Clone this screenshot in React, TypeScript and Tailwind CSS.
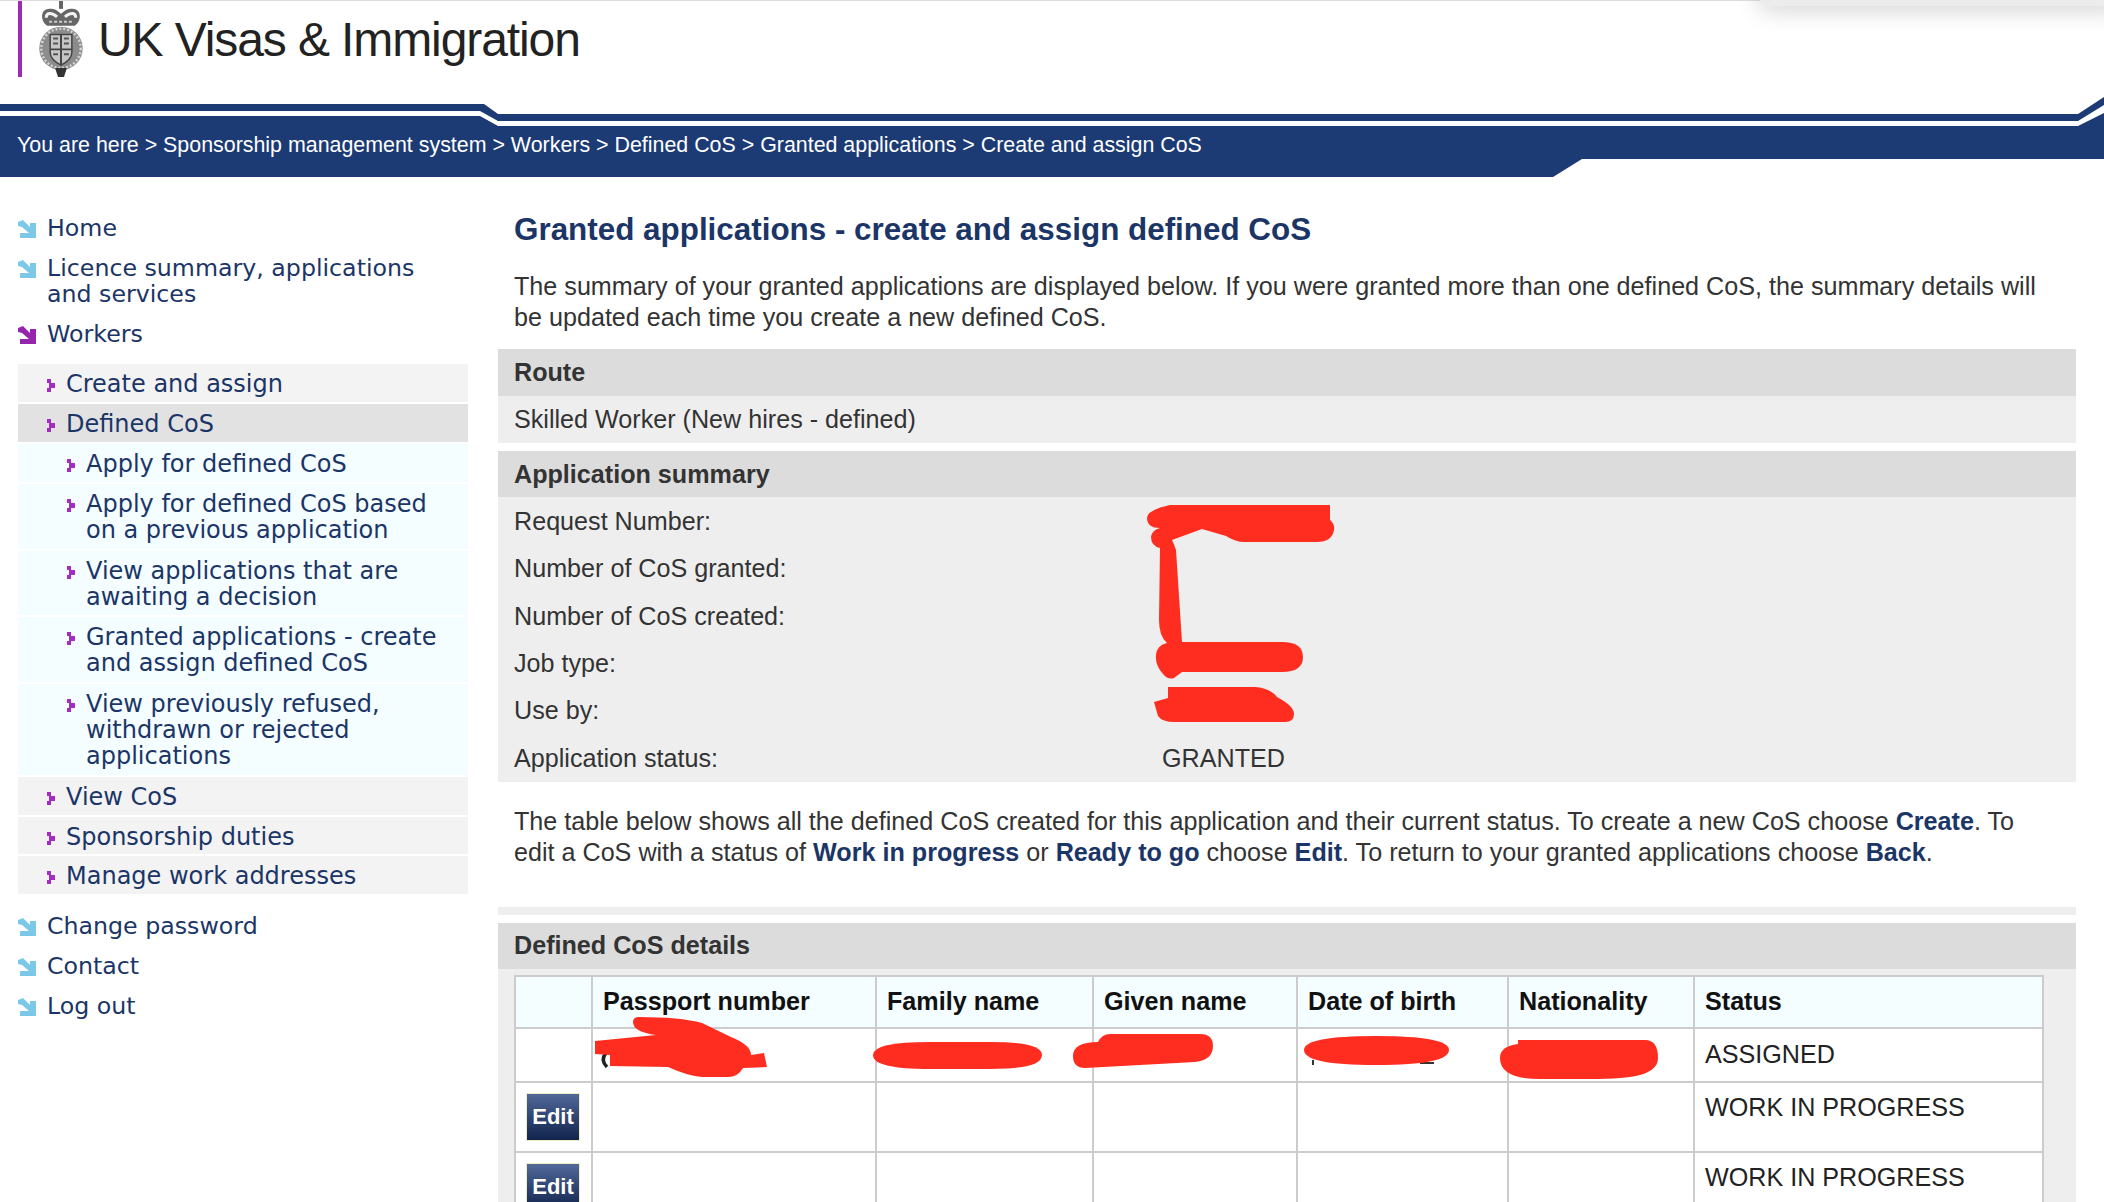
const Chevron = () => (
  <svg viewBox="0 0 8 13" className="mt-[8px] h-[13px] w-[8px] shrink-0">
    <path d="M0 0h4v4h4v5H4v4H0V9h2V4H0z" fill="#a42cc0" />
  </svg>
);

const BigArrow = ({ color }: { color: string }) => (
  <svg viewBox="0 0 18 18" className="mt-[5px] h-[18px] w-[18px] shrink-0">
    <path d="M0 2l5-2 7 7V3h6v15H2v-5h9L4 7 0 6z" fill={color} />
  </svg>
);

const TopLink = ({ label, active, className }: { label: string; active?: boolean; className?: string }) => (
  <div className={`flex gap-[11px] text-[23.7px] ${className ?? ''}`}>
    <BigArrow color={active ? '#9625ae' : '#7cc8e8'} />
    <span className="whitespace-pre-line">{label}</span>
  </div>
);

const SubLink = ({ label, bg, h, level }: { label: string; bg: string; h: string; level: number }) => (
  <div className={`flex gap-[11px] pt-[7px] ${bg} ${h} ${level === 2 ? 'pl-[49px]' : 'pl-[29px]'}`}>
    <Chevron />
    <span className="whitespace-pre-line">{label}</span>
  </div>
);

const subNav = [
  { label: 'Create and assign', bg: 'bg-[#f3f3f3]', h: 'h-[38px]', level: 1 },
  { label: 'Defined CoS', bg: 'bg-[#e2e2e2]', h: 'h-[38px]', level: 1 },
  { label: 'Apply for defined CoS', bg: 'bg-[#f4fdff]', h: 'h-[38px]', level: 2 },
  { label: 'Apply for defined CoS based\non a previous application', bg: 'bg-[#f4fdff]', h: 'h-[65px]', level: 2 },
  { label: 'View applications that are\nawaiting a decision', bg: 'bg-[#f4fdff]', h: 'h-[64px]', level: 2 },
  { label: 'Granted applications - create\nand assign defined CoS', bg: 'bg-[#f4fdff]', h: 'h-[65px]', level: 2 },
  { label: 'View previously refused,\nwithdrawn or rejected\napplications', bg: 'bg-[#f4fdff]', h: 'h-[91px]', level: 2 },
  { label: 'View CoS', bg: 'bg-[#f3f3f3]', h: 'h-[38px]', level: 1 },
  { label: 'Sponsorship duties', bg: 'bg-[#f3f3f3]', h: 'h-[37px]', level: 1 },
  { label: 'Manage work addresses', bg: 'bg-[#f3f3f3]', h: 'h-[38px]', level: 1 },
];

const summary = [
  ['Request Number:', ''],
  ['Number of CoS granted:', ''],
  ['Number of CoS created:', ''],
  ['Job type:', ''],
  ['Use by:', ''],
  ['Application status:', 'GRANTED'],
];

const Crest = () => (
  <svg viewBox="0 0 44 77" className="h-[76px] w-[44px] shrink-0">
    <path d="M22 0v8" stroke="#666" strokeWidth="4" />
    {/* crown */}
    <path d="M8 25C1 20 1 9 9 8c5-1 9 1 13 5 4-4 8-6 13-5 8 1 8 12 1 17z" fill="#666" />
    <path d="M7 17c0-5 5-6 11-1M37 17c0-5-5-6-11-1" stroke="#f2f2f2" strokeWidth="3" fill="none" />
    <path d="M10 21h24" stroke="#ccc" strokeWidth="2" strokeDasharray="3 2" />
    {/* round shield */}
    <ellipse cx="22" cy="48" rx="22" ry="22" fill="#8c8c8c" />
    <ellipse cx="22" cy="48" rx="20" ry="20" fill="none" stroke="#d4d4d4" strokeWidth="2.5" strokeDasharray="2 2" />
    <path d="M11 34h22v18c0 6-5 10-11 13-6-3-11-7-11-13z" fill="#c6c6c6" stroke="#444" strokeWidth="1.5" />
    <path d="M22 34v31M11 49h22" stroke="#444" strokeWidth="2" />
    <path d="M14 38h5M25 38h5M14 43h5M25 43h5M14 54h5M25 54h5" stroke="#555" strokeWidth="2" />
    <path d="M16 68h12l-3 9h-6z" fill="#333" />
  </svg>
);

// header stripes: upper stripe steps down at the left, breadcrumb block steps up on the right
const BandShape = () => (
  <svg viewBox="0 0 2104 80" preserveAspectRatio="none" className="absolute inset-0 h-full w-full">
    <path d="M0 7H484L498 17H2078L2104 0V8L2078 24H498L480 14H0z" fill="#1c3a73" />
    <path d="M0 19H480L498 29H2078L2104 16V62H1582L1553 80H0z" fill="#1c3a73" />
  </svg>
);

const Redactions = () => (
  <svg viewBox="0 0 2104 1202" className="pointer-events-none absolute left-0 top-0 h-[1202px] w-[2104px]">
    <path d="M606 1053Q600 1060 607 1067" stroke="#222" strokeWidth="3.5" fill="none" />
    <path d="M1313 1060v5M1420 1063h14" stroke="#333" strokeWidth="2" fill="none" />
    <g fill="#ff2d20">
      <path d="M1170 505H1330V520Q1335 524 1334 530Q1332 542 1317 542H1244Q1236 542 1226 536L1202 529L1172 540Q1174 544 1176 550L1182 642H1282Q1303 642 1303 657Q1303 672 1282 672H1182L1174 678Q1168 680 1163 674Q1155 665 1156 655Q1157 645 1167 643Q1159 636 1159 620L1160 548Q1151 546 1151 537Q1152 530 1160 528Q1147 528 1147 518Q1147 510 1170 505z" />
      <path d="M1168 687H1255Q1270 688 1277 697Q1294 706 1294 714Q1294 722 1285 722H1175Q1162 722 1158 716L1154 702L1168 698z" />
      <path d="M639 1017Q680 1017 702 1023L731 1037Q751 1045 751 1055L764 1053L767 1067L743 1068Q738 1077 728 1077H702Q688 1076 668 1067L610 1066V1055L595 1054V1041L656 1035Q633 1032 633 1022Q633 1017 639 1017z" />
      <path d="M873 1055Q873 1042 930 1042H990Q1042 1042 1042 1055Q1042 1069 990 1069H930Q873 1069 873 1055z" />
      <path d="M1098 1042Q1102 1034 1110 1034H1200Q1213 1034 1213 1046Q1213 1060 1195 1062L1085 1068Q1073 1068 1073 1056Q1073 1042 1098 1042z" />
      <path d="M1304 1050Q1304 1036 1376 1036Q1449 1036 1449 1050Q1449 1065 1376 1065Q1304 1065 1304 1050z" />
      <path d="M1518 1044V1040H1645Q1658 1040 1658 1058Q1658 1070 1640 1075Q1625 1079 1590 1079H1540Q1500 1079 1500 1058Q1500 1046 1518 1044z" />
    </g>
  </svg>
);

const EditButton = () => (
  <button className="h-[48px] w-[54px] border border-[#f0eec0] bg-gradient-to-b from-[#51699a] to-[#12244d] text-[22px] font-bold text-white">
    Edit
  </button>
);

const SectionHead = ({ title, className }: { title: string; className?: string }) => (
  <div className={`flex items-center bg-[#dcdcdc] px-[16px] font-bold text-[#333] ${className ?? 'h-[46px]'}`}>{title}</div>
);

const B = ({ children }: { children: string }) => <b className="text-[#1b3567]">{children}</b>;

const thClass = 'border-2 border-[#ccc] px-[10px] text-left align-middle font-bold text-[#111]';
const tdClass = 'border-2 border-[#ccc] px-[10px] text-[#222]';

export default function App() {
  return (
    <div className="relative h-[1202px] w-[2104px] overflow-hidden bg-white font-['Liberation_Sans',Arial,sans-serif] text-[25.15px] leading-[31px] text-[#333]">
      <div className="h-px bg-[#ddd]" />
      {/* browser popover edge sticking in at the top right */}
      <div className="absolute right-[-20px] top-[-20px] h-[26px] w-[365px] rounded-bl-[10px] bg-[#ececec] shadow-[0_4px_24px_rgba(0,0,0,0.18)]" />

      <div className="flex h-[76px] items-start">
        <div className="ml-[18px] h-[76px] w-[4px] bg-[#9c2bb3]" />
        <div className="ml-[17px]"><Crest /></div>
        <div className="ml-[15px] mt-[12px] text-[48px] leading-[54px] tracking-[-1.1px] text-[#222]">UK Visas &amp; Immigration</div>
      </div>

      <div className="relative mt-[20px] h-[80px]">
        <BandShape />
        <div className="relative pl-[17px] pt-[35px] text-[21.4px] leading-[26px] text-white">
          You are here &gt; Sponsorship management system &gt; Workers &gt; Defined CoS &gt; Granted applications &gt; Create and assign CoS
        </div>
      </div>

      <div className="flex">
        <nav className="w-[498px] shrink-0 pl-[18px] pt-[38px] font-['DejaVu_Sans','Verdana',sans-serif] text-[24px] leading-[26px] text-[#1b3567]">
          <TopLink label="Home" />
          <TopLink label={'Licence summary, applications\nand services'} className="mt-[14px]" />
          <TopLink label="Workers" active className="mt-[14px]" />
          <div className="mt-[17px] flex w-[450px] flex-col gap-[2px]">
            {subNav.map((item) => (
              <SubLink key={item.label} {...item} />
            ))}
          </div>
          <TopLink label="Change password" className="mt-[19px]" />
          <TopLink label="Contact" className="mt-[14px]" />
          <TopLink label="Log out" className="mt-[14px]" />
        </nav>

        <main className="w-[1578px]">
          <h1 className="ml-[16px] mt-[35px] text-[31.4px] font-bold leading-[36px] text-[#1b3567]">
            Granted applications - create and assign defined CoS
          </h1>
          <p className="mx-[16px] mt-[23px] leading-[31px]">
            The summary of your granted applications are displayed below. If you were granted more than one defined CoS, the summary details will be updated each time you create a new defined CoS.
          </p>

          <div className="mt-[16px]">
            <SectionHead title="Route" className="h-[47px]" />
            <div className="flex h-[47px] items-center bg-[#eee] px-[16px]">Skilled Worker (New hires - defined)</div>
          </div>

          <div className="mt-[8px]">
            <SectionHead title="Application summary" />
            <div className="bg-[#eee] px-[16px] pt-[1px]">
              {summary.map(([label, value]) => (
                <div key={label} className="flex h-[47.3px] items-center">
                  <div className="w-[648px]">{label}</div>
                  <div>{value}</div>
                </div>
              ))}
            </div>
          </div>

          <p className="mx-[16px] mt-[24px] leading-[31px]">
            The table below shows all the defined CoS created for this application and their current status. To create a new CoS choose <B>Create</B>. To edit a CoS with a status of <B>Work in progress</B> or <B>Ready to go</B> choose <B>Edit</B>. To return to your granted applications choose <B>Back</B>.
          </p>

          <div className="mt-[39px] h-[8px] bg-[#eee]" />

          <div className="mt-[8px] bg-[#eee] pb-[40px]">
            <SectionHead title="Defined CoS details" />
            <div className="px-[16px] pt-[6px]">
              <table className="w-[1530px] table-fixed border-collapse bg-white">
                <colgroup>
                  <col className="w-[77px]" />
                  <col className="w-[284px]" />
                  <col className="w-[217px]" />
                  <col className="w-[204px]" />
                  <col className="w-[211px]" />
                  <col className="w-[186px]" />
                  <col />
                </colgroup>
                <thead>
                  <tr className="h-[52px] bg-[#f4fdff]">
                    <th className={thClass}></th>
                    <th className={thClass}>Passport number</th>
                    <th className={thClass}>Family name</th>
                    <th className={thClass}>Given name</th>
                    <th className={thClass}>Date of birth</th>
                    <th className={thClass}>Nationality</th>
                    <th className={thClass}>Status</th>
                  </tr>
                </thead>
                <tbody>
                  <tr className="h-[54px]">
                    <td className={tdClass}></td>
                    <td className={tdClass}></td>
                    <td className={tdClass}></td>
                    <td className={tdClass}></td>
                    <td className={tdClass}></td>
                    <td className={tdClass}></td>
                    <td className={tdClass}>ASSIGNED</td>
                  </tr>
                  {[0, 1].map((i) => (
                    <tr key={i} className="h-[70px]">
                      <td className={`${tdClass} align-middle`}><EditButton /></td>
                      <td className={tdClass}></td>
                      <td className={tdClass}></td>
                      <td className={tdClass}></td>
                      <td className={tdClass}></td>
                      <td className={tdClass}></td>
                      <td className={`${tdClass} pt-[9px] align-top`}>WORK IN PROGRESS</td>
                    </tr>
                  ))}
                </tbody>
              </table>
            </div>
          </div>
        </main>
      </div>

      <Redactions />
    </div>
  );
}
